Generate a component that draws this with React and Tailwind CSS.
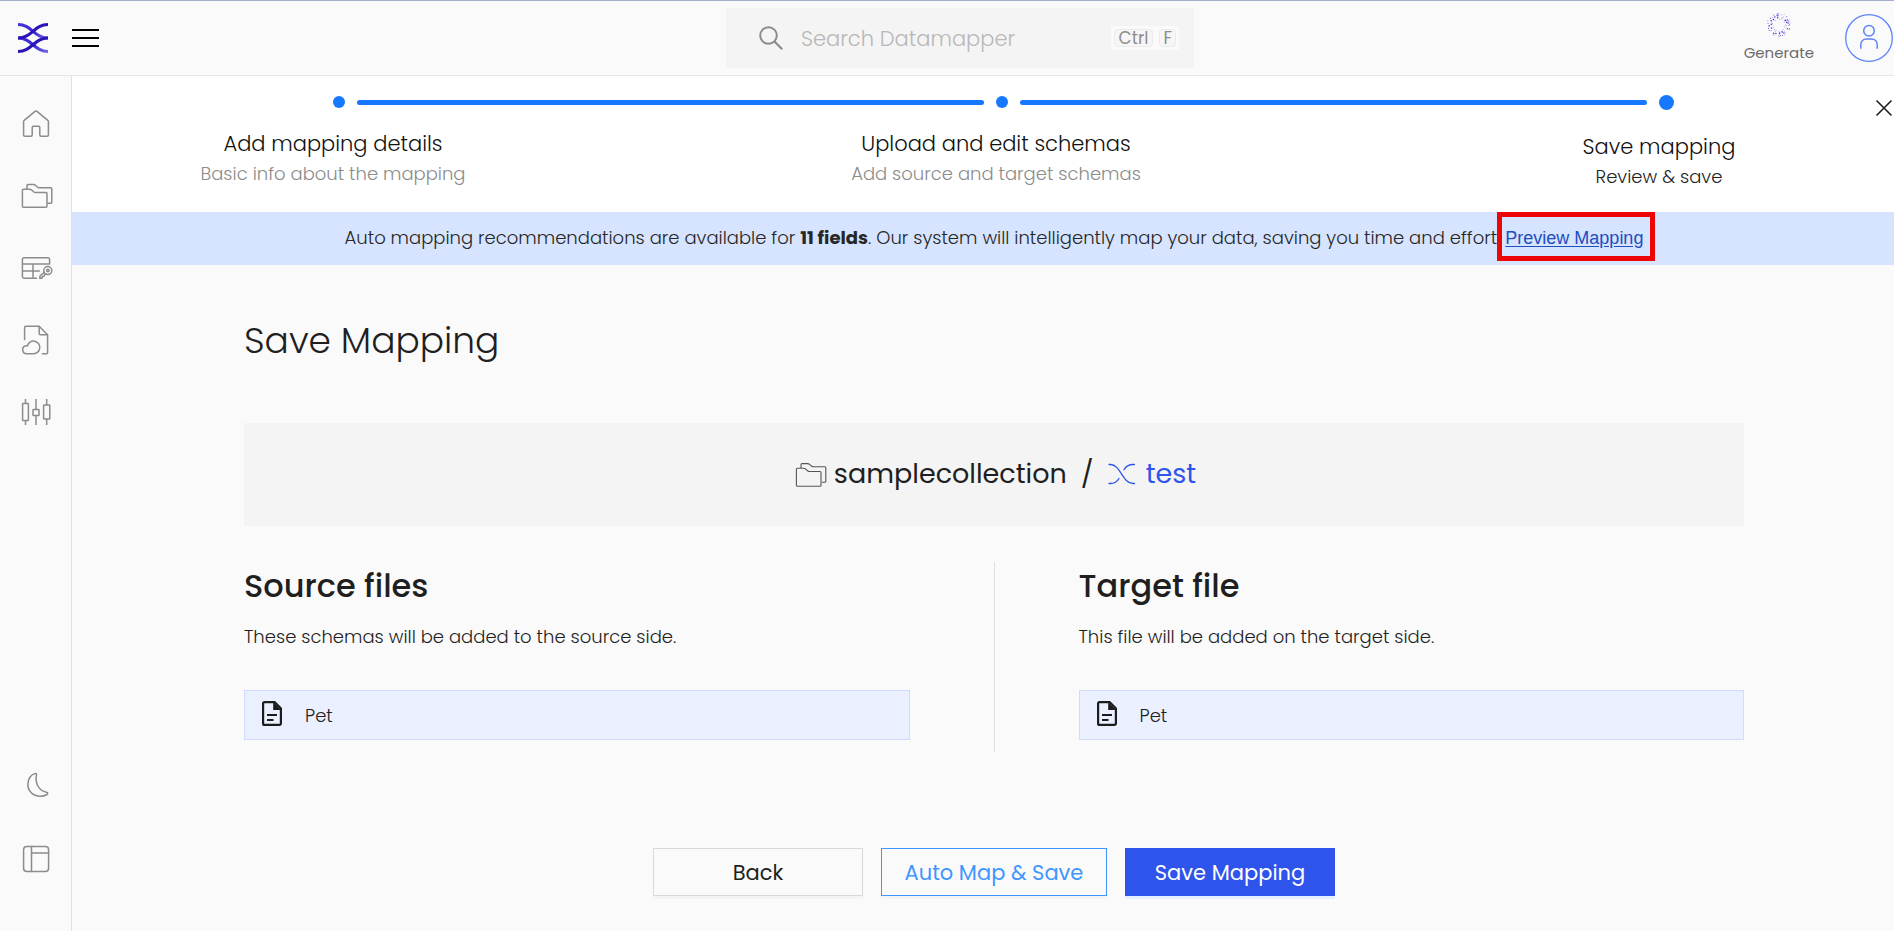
const iconProps = {
  width: 36,
  height: 36,
  viewBox: '0 0 36 36',
  fill: 'none',
  stroke: 'currentColor',
  strokeWidth: 1.5,
  strokeLinejoin: 'round',
  strokeLinecap: 'round',
  'aria-hidden': true,
};

const HomeIcon = () => (
  <svg {...iconProps}>
    <path d="M5.6 15.5a1.5 1.5 0 0 1 .6-1.2L17 5.3a1.6 1.6 0 0 1 2 0l10.8 9a1.5 1.5 0 0 1 .6 1.2v13.6a1.2 1.2 0 0 1-1.2 1.2H23a1.2 1.2 0 0 1-1.2-1.2v-7.6a1.2 1.2 0 0 0-1.2-1.2h-5.2a1.2 1.2 0 0 0-1.2 1.2v7.6a1.2 1.2 0 0 1-1.2 1.2H6.8a1.2 1.2 0 0 1-1.2-1.2z" />
  </svg>
);

const FoldersPaths = () => (
  <>
    <path d="M5.4 11.2h6.4c.6 0 1 .2 1.5.6l2.6 2.2c.5.4.9.5 1.5.5h10.6a1 1 0 0 1 1 1v12.8a1 1 0 0 1-1 1H5.4a1 1 0 0 1-1-1V12.2a1 1 0 0 1 1-1z" />
    <path d="M9 11V7.6a1 1 0 0 1 1-1h5.8c.6 0 1 .2 1.5.6l2.5 2.1c.5.4.9.5 1.5.5h11.500a1 1 0 0 1 1 1v13.400a1 1 0 0 1-1 1h-3" />
  </>
);

const FoldersIcon = () => (
  <svg {...iconProps}>
    <FoldersPaths />
  </svg>
);

const TableKeyIcon = () => (
  <svg {...iconProps}>
    <path d="M18.5 28.3H6.2a1.8 1.8 0 0 1-1.8-1.8V9.5a1.8 1.8 0 0 1 1.8-1.8h23.6a1.8 1.8 0 0 1 1.8 1.8v4.6H4.4M15 14.1v14.2M4.4 21h17" />
    <circle cx="29.8" cy="20.6" r="4" />
    <circle cx="29.9" cy="20.5" r="1.2" />
    <path d="M26.2 22.3l-4.2 3.7-.2 2.4 2.300-.3.3-1.700 1.800-.3.3-1.500 1.500-.5" />
  </svg>
);

const FileCloudIcon = () => (
  <svg {...iconProps}>
    <path d="M6.6 17.5V5.5a1.2 1.2 0 0 1 1.2-1.2h13.4l8.4 8.4v17.8a1.2 1.2 0 0 1-1.2 1.2H24.5M21.2 4.5v7a1.2 1.2 0 0 0 1.2 1.2h7" />
    <path d="M8.6 31.7a4 4 0 0 1-.8-7.900 3 3 0 0 1 1.600.1 6.300 6.300 0 1 1 6 7.800z" />
  </svg>
);

const SlidersIcon = () => (
  <svg {...iconProps} strokeLinecap="butt">
    <rect x="4.6" y="9.5" width="5.8" height="17" rx="0.6" />
    <rect x="15" y="15.5" width="6" height="6" rx="0.6" />
    <rect x="25.6" y="11" width="6.2" height="14" rx="0.6" />
    <path d="M7.5 5v4.500M7.500 26.500V31M18 5v10.500M18 21.500V31M28.700 5v6M28.700 25v6" />
  </svg>
);

const MoonIcon = () => (
  <svg {...iconProps}>
    <path d="M17.4 6.4c.8-.1 1.300.5 1.100 1.200-1.800 9 2.500 16.200 10 17.600 1.300.2 1.600 1.600.5 2.300a12.200 12.200 0 0 1-7.700 1.800C14.200 28.600 9.600 23.500 9.900 17c.3-5.200 3.200-9.300 7.500-10.600z" />
  </svg>
);

const LayoutIcon = () => (
  <svg {...iconProps}>
    <rect x="5.6" y="5.6" width="25" height="24.8" rx="3.2" />
    <path d="M13.5 5.6v24.8M13.5 12h17" />
  </svg>
);

const Logo = () => (
  <svg width="30" height="30" viewBox="0 0 30 30" fill="none" strokeWidth="3" aria-hidden="true">
    <defs>
      <linearGradient id="logoFade" x1="0" y1="0" x2="1" y2="1">
        <stop offset="0" stopColor="#4633dc" />
        <stop offset="0.55" stopColor="#3a24cf" />
        <stop offset="1" stopColor="#7468e6" />
      </linearGradient>
    </defs>
    <path d="M0 1.6C14 1.6 16 15 30 15" stroke="url(#logoFade)" />
    <path d="M0 15C14 15 16 28.5 30 28.5" stroke="url(#logoFade)" />
    <path d="M0 15C14 15 16 1.6 30 1.6" stroke="#2a14b8" />
    <path d="M0 28.5C14 28.5 16 15 30 15" stroke="#2a14b8" />
  </svg>
);

const sparkRings = [
  { radius: 6.3, count: 13, r: 0.45 },
  { radius: 7.9, count: 13, r: 0.8 },
  { radius: 9.4, count: 15, r: 0.75 },
  { radius: 10.8, count: 19, r: 0.5 },
  { radius: 11.6, count: 10, r: 0.4 },
];

const sparkDots = sparkRings.flatMap((ring, n) =>
  Array.from({ length: ring.count }, (_, i) => {
    const angle = (i / ring.count) * Math.PI * 2 + n * 0.7 + Math.sin(i * 5 + n) * 0.16;
    const radius = ring.radius + Math.sin(i * 3 + n) * 0.4;
    return { x: 12 + Math.cos(angle) * radius, y: 12 + Math.sin(angle) * radius, r: i % 3 ? ring.r : 0.4 };
  }),
);

const SparkIcon = () => (
  <svg width="24" height="24" viewBox="0 0 24 24" fill="#4b32dd" aria-hidden="true">
    {sparkDots.map((d, i) => (
      <circle key={i} cx={d.x} cy={d.y} r={d.r} />
    ))}
  </svg>
);

const UserIcon = () => (
  <svg width="48" height="48" viewBox="0 0 48 48" fill="none" stroke="#5d84f8" aria-hidden="true">
    <circle cx="24" cy="24" r="23.3" strokeWidth="1.3" />
    <circle cx="24" cy="16.8" r="5.3" strokeWidth="1.5" />
    <path d="M15.8 34.8v-4.300a5.600 5.600 0 0 1 5.600-5.600h5.200a5.600 5.600 0 0 1 5.600 5.600v4.300" strokeWidth="1.5" />
  </svg>
);

const SearchIcon = () => (
  <svg width="24" height="24" viewBox="0 0 24 24" fill="none" stroke="#8c8c8c" strokeWidth="2" aria-hidden="true">
    <circle cx="9.5" cy="9.5" r="8.3" />
    <path d="M15.5 15.5l7.7 7.7" strokeWidth="2.2" />
  </svg>
);

const MappingIcon = () => (
  <svg width="28" height="24" viewBox="0 1 28 24" fill="none" stroke="currentColor" strokeWidth="1.3" strokeLinecap="round" aria-hidden="true">
    <path d="M1 2.5h1.5C12.5 2.5 14.5 21.5 25 21.5h1.5" />
    <path d="M26.5 2.5H25c-4.500 0-7 1.600-9 5.200M1 21.500h1.500c4 0 6.500-1.600 8.500-5" />
  </svg>
);

const DocumentIcon = () => (
  <svg width="20" height="25" viewBox="0 0 20 25" aria-hidden="true">
    <path d="M2.6 1.1H12.6L18.9 7.4V22.4a1.5 1.5 0 0 1-1.5 1.500H2.600a1.500 1.500 0 0 1-1.500-1.500V2.600a1.500 1.500 0 0 1 1.500-1.500z" fill="none" stroke="#1c1c1c" strokeWidth="2.2" />
    <path d="M11.2 1v8H19z" fill="#1c1c1c" />
    <path d="M5 14h10M5 19h6.5" stroke="#1c1c1c" strokeWidth="2.2" />
  </svg>
);

const CloseIcon = () => (
  <svg width="18" height="18" viewBox="0 0 18 18" stroke="#1f1f1f" strokeWidth="1.6" aria-hidden="true">
    <path d="M1.5 1.5l15 15M16.5 1.5l-15 15" />
  </svg>
);

function NavButton({ label, icon: Icon }) {
  return (
    <button type="button" aria-label={label} className="flex size-9 items-center justify-center text-[#8c8c8c]">
      <Icon />
    </button>
  );
}

function Header() {
  return (
    <header className="grid h-[76px] grid-cols-[708fr_468px_700fr] items-center border-t border-b border-t-[#a3afcb] border-b-[#e6e6e6] pl-[18px]">
      <div className="flex items-center gap-6">
        <a href="#home" aria-label="Datamapper home">
          <Logo />
        </a>
        <button type="button" aria-label="Toggle menu" className="flex w-[27px] flex-col gap-1.5">
          <span className="h-0.5 w-full bg-black" />
          <span className="h-0.5 w-full bg-black" />
          <span className="h-0.5 w-full bg-black" />
        </button>
      </div>
      <label className="flex h-[60px] items-center bg-[#f4f4f4] pr-[15px] pl-[33px]">
        <SearchIcon />
        <input
          type="text"
          aria-label="Search Datamapper"
          placeholder="Search Datamapper"
          className="ml-[18px] min-w-0 flex-1 bg-transparent pt-0.5 text-[21px] font-light outline-none placeholder:text-[#b8b8b8]"
        />
        <span className="flex items-center gap-1.5 bg-[#fafafa] px-[3px] py-[3px] text-[17px] leading-4 text-[#8c8c8c]">
          <kbd className="rounded border border-[#ebebeb] bg-[#f6f6f6] px-1 font-[inherit]">Ctrl</kbd>
          <kbd className="rounded border border-[#ebebeb] bg-[#f6f6f6] px-[3px] font-[inherit]">F</kbd>
        </span>
      </label>
      <div className="flex items-center justify-end gap-[31px] pr-px">
        <button type="button" className="flex flex-col items-center gap-1.5 text-[15px] leading-5 text-[#6b6b6b]">
          <SparkIcon />
          Generate
        </button>
        <button type="button" aria-label="Account">
          <UserIcon />
        </button>
      </div>
    </header>
  );
}

function Sidebar() {
  return (
    <nav aria-label="Main" className="flex w-[72px] shrink-0 flex-col items-center justify-between border-r border-[#e2e2e2] pt-[30px] pb-[55px]">
      <div className="flex flex-col gap-9">
        <NavButton label="Home" icon={HomeIcon} />
        <NavButton label="Collections" icon={FoldersIcon} />
        <NavButton label="Lookup tables" icon={TableKeyIcon} />
        <NavButton label="Cloud files" icon={FileCloudIcon} />
        <NavButton label="Settings" icon={SlidersIcon} />
      </div>
      <div className="flex flex-col gap-[38px]">
        <NavButton label="Dark mode" icon={MoonIcon} />
        <NavButton label="Layout" icon={LayoutIcon} />
      </div>
    </nav>
  );
}

const steps = [
  { title: 'Add mapping details', note: 'Basic info about the mapping' },
  { title: 'Upload and edit schemas', note: 'Add source and target schemas' },
  { title: 'Save mapping', note: 'Review & save', current: true },
];

function Stepper() {
  return (
    <section aria-label="Progress" className="relative h-[136px] bg-white pt-[18px]">
      <div className="flex h-4 items-center gap-3 pr-[220px] pl-[261px]">
        <span className="size-3 rounded-full bg-[#1677ff]" />
        <span className="h-[5px] flex-1 rounded-sm bg-[#1677ff]" />
        <span className="size-3 rounded-full bg-[#1677ff]" />
        <span className="h-[5px] flex-1 rounded-sm bg-[#1677ff]" />
        <span className="size-[15px] rounded-full bg-[#1677ff]" />
      </div>
      <ol className="flex justify-between pt-[18px] pr-[65px] pl-[91px] text-center">
        {steps.map((s) => (
          <li key={s.title} className={s.current ? 'w-[340px] pt-[3px]' : 'w-[340px]'}>
            <p className="text-[21px] leading-8 font-light text-[#111]">{s.title}</p>
            <p className={s.current ? 'text-[18px] leading-7 font-light text-[#222]' : 'text-[18px] leading-7 font-light text-[#8c8c8c]'}>
              {s.note}
            </p>
          </li>
        ))}
      </ol>
      <button type="button" aria-label="Close" className="absolute top-[23px] right-px">
        <CloseIcon />
      </button>
    </section>
  );
}

function Banner() {
  return (
    <p className="flex h-[53px] items-center justify-center bg-[#d6e4ff] pb-0.5 pl-[22px] text-[18px] font-light whitespace-pre text-[#262626]">
      <span>
        Auto mapping recommendations are available for <strong className="font-bold">11 fields</strong>. Our system will
        {' intelligently map your data, saving you time and effort. '}
      </span>
      <span className="relative">
        <a href="#preview" className="font-['Liberation_Sans',Arial,sans-serif] font-normal text-[#1d4ec2] underline underline-offset-2">
          Preview Mapping
        </a>
        <span className="pointer-events-none absolute -top-3 -right-3 -bottom-[9px] -left-2 border-[5px] border-[#ec0606]" />
      </span>
    </p>
  );
}

function FileColumn({ title, note, file }) {
  return (
    <section className="flex-1 pt-1 pb-3">
      <h2 className="text-[32px] leading-10 font-medium">{title}</h2>
      <p className="mt-[17px] text-[18px] leading-7 font-light">{note}</p>
      <div className="mt-[39px] flex h-[50px] items-center border border-[#d0dcff] bg-[#eaf0ff] pl-[17px] text-[18px] font-light">
        <span className="pb-1">
          <DocumentIcon />
        </span>
        <span className="ml-[23px]">{file}</span>
      </div>
    </section>
  );
}

export default function App() {
  return (
    <div className="flex min-h-screen flex-col bg-[#fafafa] font-[Poppins,Inter,sans-serif] text-[#1f1f1f]">
      <Header />
      <div className="flex flex-1">
        <Sidebar />
        <main className="min-w-0 flex-1">
          <Stepper />
          <Banner />
          <div className="pr-[150px] pb-9 pl-[172px]">
            <h1 className="mt-[52px] text-[36px] leading-[48px] font-light">Save Mapping</h1>
            <div className="mt-[58px] flex h-[103px] items-center justify-center bg-[#f4f4f4] text-[27px]">
              <svg width="36" height="36" viewBox="0 0 36 36" fill="none" stroke="#555" strokeWidth="1.1" aria-hidden="true">
                <FoldersPaths />
              </svg>
              <span className="ml-1.5">samplecollection</span>
              <span className="mx-3.5">/</span>
              <a href="#test" className="flex items-center gap-2.5 text-[#2f54eb]">
                <MappingIcon />
                test
              </a>
            </div>
            <div className="mt-9 flex">
              <FileColumn title="Source files" note="These schemas will be added to the source side." file="Pet" />
              <div className="mx-[84px] w-px bg-[#e0e0e0]" />
              <FileColumn title="Target file" note="This file will be added on the target side." file="Pet" />
            </div>
            <div className="mt-24 flex justify-center gap-[18px] text-[21px]">
              <button type="button" className="h-12 w-[210px] border border-[#d9d9d9] pt-0.5 shadow-[0_3px_0_#f4f4f4]">
                Back
              </button>
              <button type="button" className="h-12 w-[226px] border border-[#4096ff] pt-0.5 text-[#4096ff] shadow-[0_3px_0_#f4f4f4]">
                Auto Map &amp; Save
              </button>
              <button type="button" className="h-12 w-[210px] bg-[#2f54eb] pt-0.5 text-white shadow-[0_3px_0_#e6efff]">
                Save Mapping
              </button>
            </div>
          </div>
        </main>
      </div>
    </div>
  );
}
